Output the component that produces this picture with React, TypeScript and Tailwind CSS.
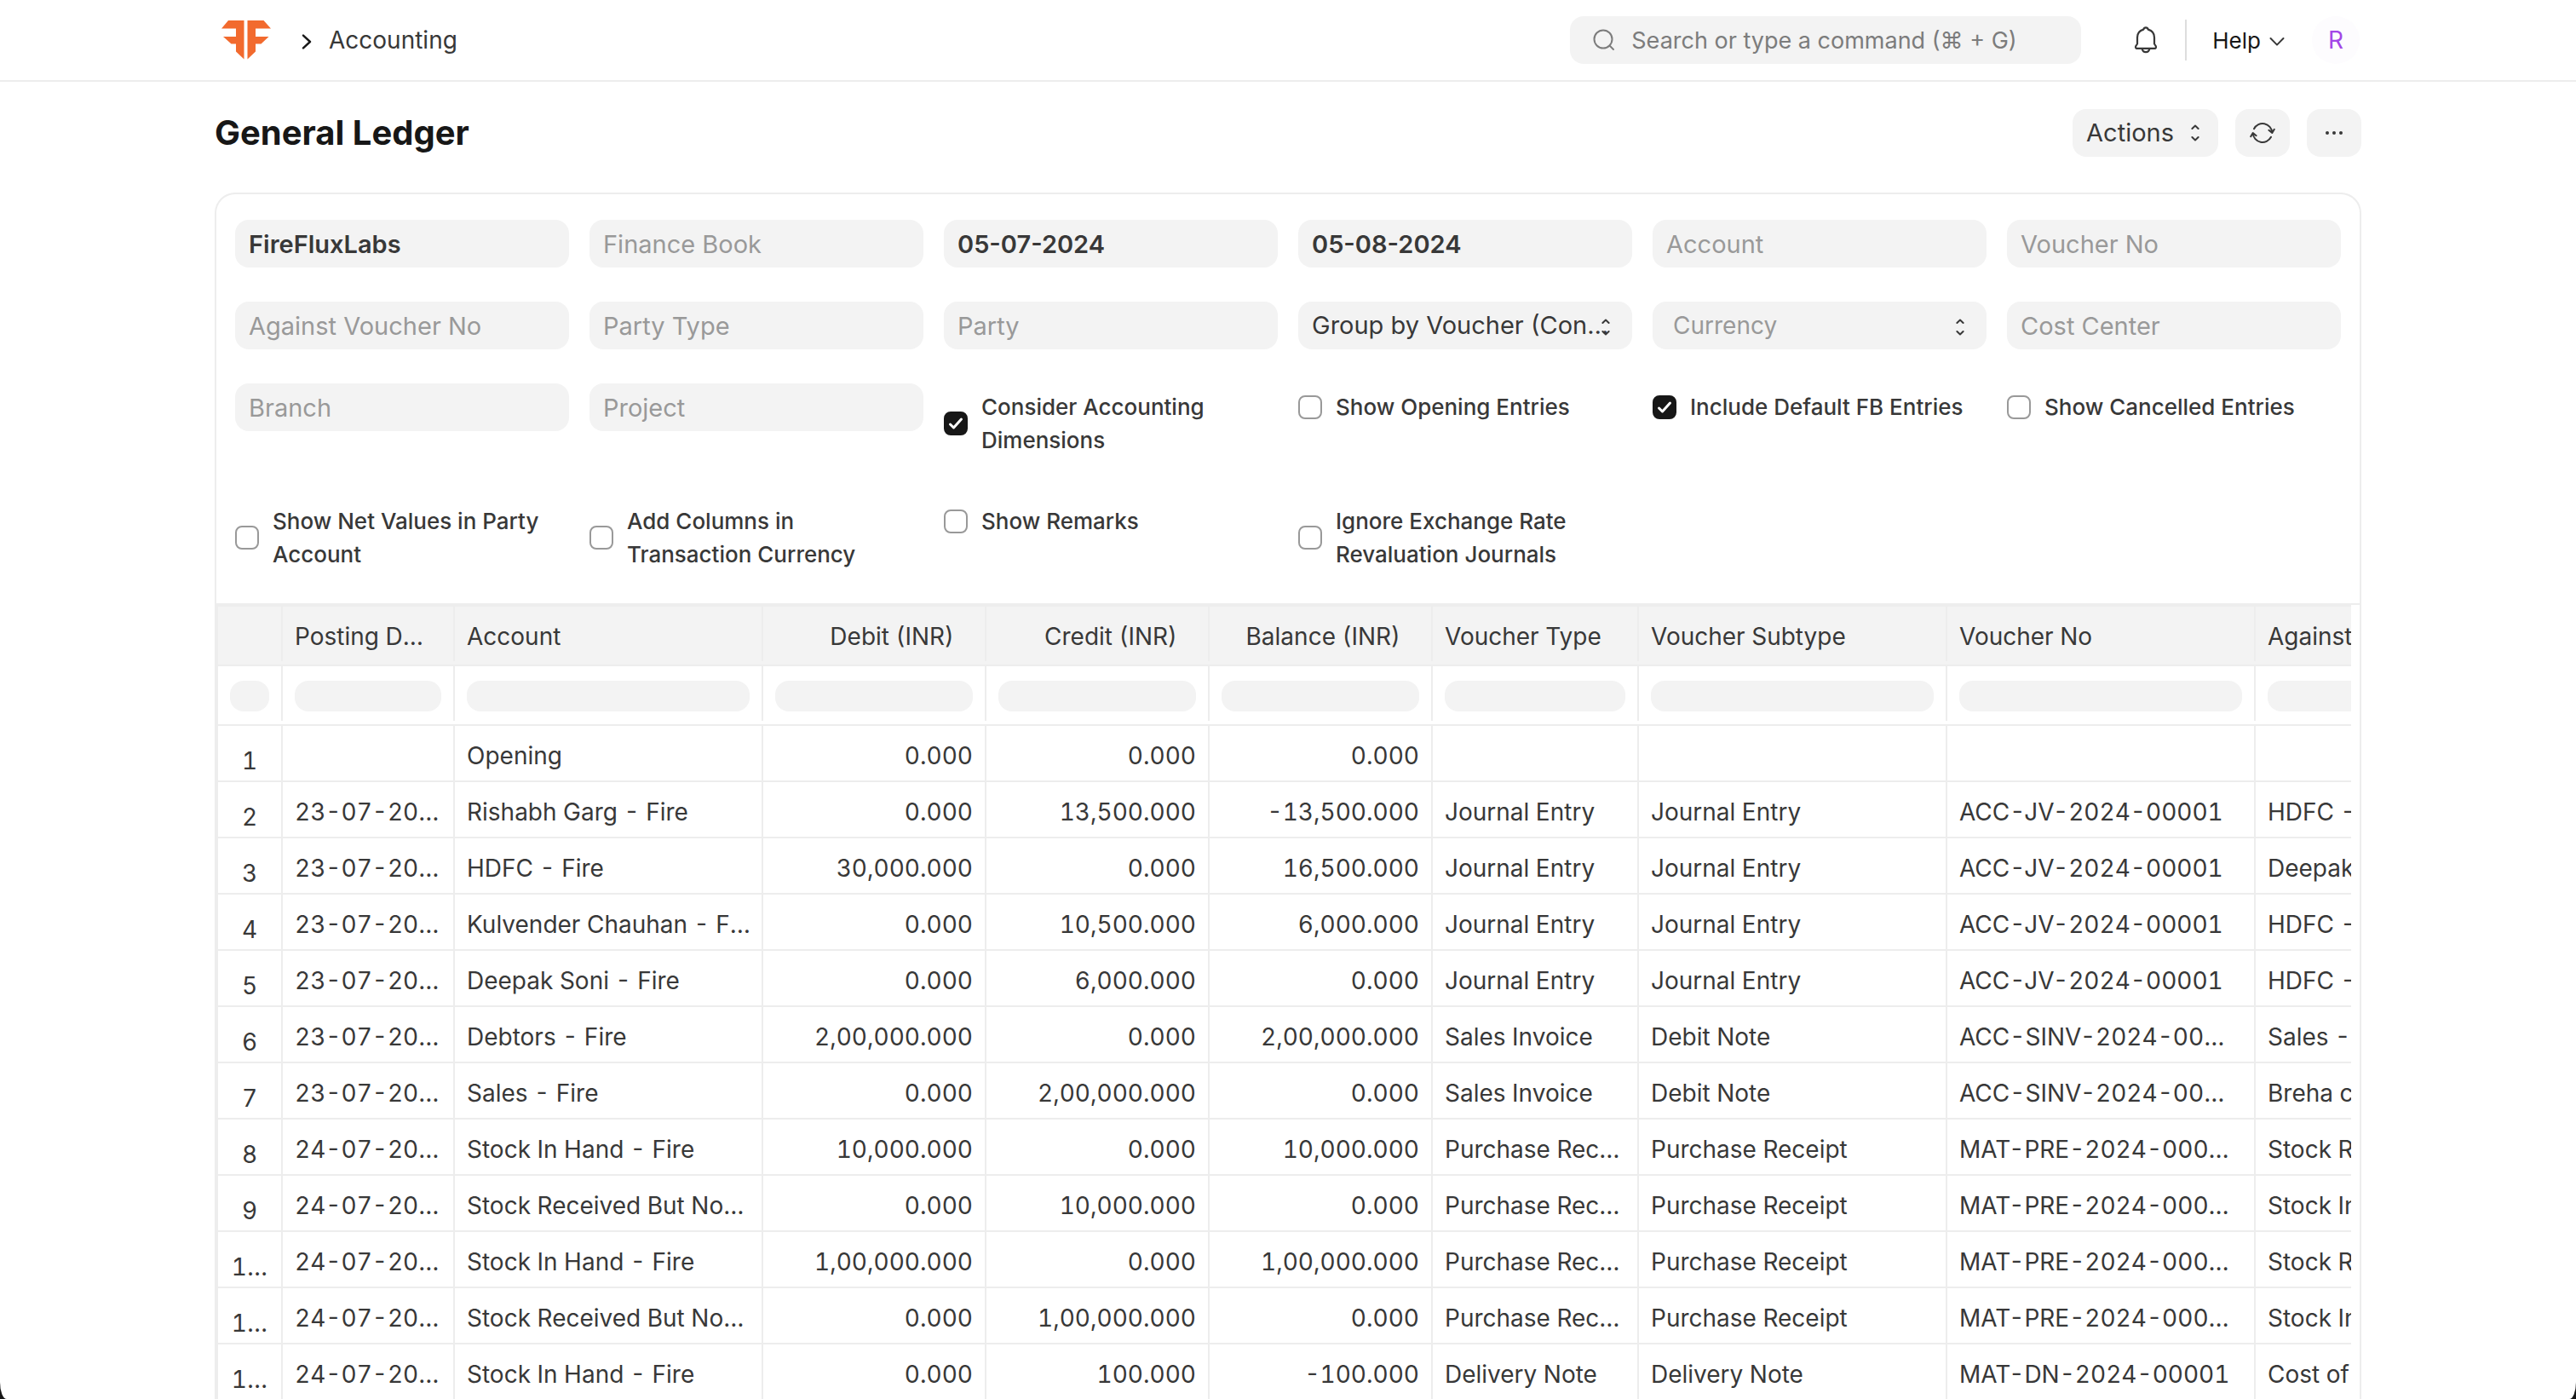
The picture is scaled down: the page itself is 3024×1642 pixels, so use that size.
import React, { useState } from 'react';

const COLUMNS = [
  { name: 'Posting Date', width: 202 },
  { name: 'Account', width: 362 },
  { name: 'Debit (INR)', width: 262, numeric: true },
  { name: 'Credit (INR)', width: 262, numeric: true },
  { name: 'Balance (INR)', width: 262, numeric: true },
  { name: 'Voucher Type', width: 242 },
  { name: 'Voucher Subtype', width: 362 },
  { name: 'Voucher No', width: 362 },
  { name: 'Against Account', width: 362 },
];

const ROWS = [
  ['1', '', 'Opening', '0.000', '0.000', '0.000', '', '', '', ''],
  ['2', '23-07-2024', 'Rishabh Garg - Fire', '0.000', '13,500.000', '-13,500.000', 'Journal Entry', 'Journal Entry', 'ACC-JV-2024-00001', 'HDFC - Fire'],
  ['3', '23-07-2024', 'HDFC - Fire', '30,000.000', '0.000', '16,500.000', 'Journal Entry', 'Journal Entry', 'ACC-JV-2024-00001', 'Deepak Soni - Fire'],
  ['4', '23-07-2024', 'Kulvender Chauhan - Fire', '0.000', '10,500.000', '6,000.000', 'Journal Entry', 'Journal Entry', 'ACC-JV-2024-00001', 'HDFC - Fire'],
  ['5', '23-07-2024', 'Deepak Soni - Fire', '0.000', '6,000.000', '0.000', 'Journal Entry', 'Journal Entry', 'ACC-JV-2024-00001', 'HDFC - Fire'],
  ['6', '23-07-2024', 'Debtors - Fire', '2,00,000.000', '0.000', '2,00,000.000', 'Sales Invoice', 'Debit Note', 'ACC-SINV-2024-00…', 'Sales - Fire'],
  ['7', '23-07-2024', 'Sales - Fire', '0.000', '2,00,000.000', '0.000', 'Sales Invoice', 'Debit Note', 'ACC-SINV-2024-00…', 'Breha corp'],
  ['8', '24-07-2024', 'Stock In Hand - Fire', '10,000.000', '0.000', '10,000.000', 'Purchase Receipt', 'Purchase Receipt', 'MAT-PRE-2024-000…', 'Stock Received But Not Billed'],
  ['9', '24-07-2024', 'Stock Received But Not Billed', '0.000', '10,000.000', '0.000', 'Purchase Receipt', 'Purchase Receipt', 'MAT-PRE-2024-000…', 'Stock In Hand - Fire'],
  ['1…', '24-07-2024', 'Stock In Hand - Fire', '1,00,000.000', '0.000', '1,00,000.000', 'Purchase Receipt', 'Purchase Receipt', 'MAT-PRE-2024-000…', 'Stock Received But Not Billed'],
  ['1…', '24-07-2024', 'Stock Received But Not Billed', '0.000', '1,00,000.000', '0.000', 'Purchase Receipt', 'Purchase Receipt', 'MAT-PRE-2024-000…', 'Stock In Hand - Fire'],
  ['1…', '24-07-2024', 'Stock In Hand - Fire', '0.000', '100.000', '-100.000', 'Delivery Note', 'Delivery Note', 'MAT-DN-2024-00001', 'Cost of Goods Sold - Fire'],
];

function Logo() {
  return (
    <svg width="58" height="46" viewBox="0 0 58 46" fill="#f26a2e" aria-hidden="true">
      <path d="M8 0H26.5V45.5L17 36.5V27.5H11.5L2 19H17V9.5H0Z" />
      <path d="M30.5 0H49.5L58 9.5H40V19H55.5L46.5 27.5H40V36.5L30.5 45.5Z" />
    </svg>
  );
}

function SortArrows({ className = '' }: { className?: string }) {
  return (
    <svg width="10" height="20" viewBox="0 0 10 20" fill="none" stroke="#383838" strokeWidth="2" strokeLinecap="round" strokeLinejoin="round" className={className} aria-hidden="true">
      <path d="M1.4 5L5 1.6L8.6 5M1.4 15L5 18.4L8.6 15" />
    </svg>
  );
}

function TextField({ label, value = '' }: { label: string; value?: string }) {
  const [text, setText] = useState(value);
  return (
    <input
      type="text"
      aria-label={label}
      placeholder={label}
      value={text}
      onChange={(e) => setText(e.target.value)}
      className="h-14 w-full min-w-0 rounded-2xl bg-[#f3f3f3] px-4 text-[29px] font-semibold text-[#383838] outline-none placeholder:font-normal placeholder:text-[#999999]"
    />
  );
}

function CheckField({ label, checked = false }: { label: string; checked?: boolean }) {
  const [on, setOn] = useState(checked);
  return (
    <label className="flex items-center gap-4 self-start py-2 text-[26px] leading-[39px] font-medium text-[#383838]">
      <span className="relative flex size-7 shrink-0">
        <input
          type="checkbox"
          checked={on}
          onChange={() => setOn(!on)}
          className="size-7 appearance-none rounded-lg border-2 border-[#999999] bg-white checked:border-[#171717] checked:bg-[#171717]"
        />
        {on && (
          <svg width="28" height="28" viewBox="0 0 28 28" fill="none" stroke="white" strokeWidth="3" strokeLinecap="round" strokeLinejoin="round" className="pointer-events-none absolute inset-0">
            <path d="M7.5 15L11.5 19L20.5 9" />
          </svg>
        )}
      </span>
      {label}
    </label>
  );
}

export default function GeneralLedger() {
  return (
    <div className="h-screen overflow-hidden bg-[#171717]">
      <div className="flex h-full flex-col overflow-hidden bg-white font-['Inter',sans-serif] text-[28px] text-[#383838] [border-bottom-left-radius:8px_20px] [border-bottom-right-radius:8px_20px]">
        <header className="h-24 shrink-0 border-b-2 border-[#ededed]">
          <div className="mx-auto flex h-full max-w-[2520px] items-center pr-[2px] pl-2">
            <a href="#home" aria-label="Home"><Logo /></a>
            <svg width="12" height="18" viewBox="0 0 12 18" fill="none" stroke="#171717" strokeWidth="2.4" strokeLinecap="round" strokeLinejoin="round" className="mt-1 mr-5 ml-9" aria-hidden="true">
              <path d="M2 1.6L10 9L2 16.4" />
            </svg>
            <a href="#accounting">Accounting</a>

            <div className="relative ml-auto w-[600px]">
              <svg width="28" height="28" viewBox="0 0 28 28" fill="none" stroke="#7c7c7c" strokeWidth="2" strokeLinecap="round" className="absolute top-[14px] left-[26px]" aria-hidden="true">
                <circle cx="13" cy="13" r="10.5" />
                <path d="M20.5 20.5L25 25" />
              </svg>
              <input type="text" aria-label="Search" placeholder="Search or type a command (⌘ + G)" className="h-14 w-full rounded-2xl bg-[#f3f3f3] pr-4 pl-[72px] text-[27px] outline-none placeholder:text-[#7c7c7c]" />
            </div>
            <button type="button" aria-label="Notifications" className="ml-[62px]">
              <svg width="28" height="32" viewBox="0 0 28 32" fill="none" stroke="#383838" strokeWidth="2.2" strokeLinejoin="round">
                <path d="M14 1.3C12.4 1.3 11.6 2.2 11.2 3.6C7 4.8 4 8.4 4 13V20.5L2.3 23C1.6 24.4 2.2 25.8 3.6 25.8H24.4C25.8 25.8 26.4 24.4 25.7 23L24 20.5V13C24 8.4 21 4.8 16.8 3.6C16.4 2.2 15.6 1.3 14 1.3Z" />
                <path d="M9.6 26C10 28.6 11.6 30.2 14 30.2C16.4 30.2 18 28.6 18.4 26" />
              </svg>
            </button>
            <div className="mr-[30px] ml-8 h-12 w-[2px] bg-[#dddddd]" />
            <button type="button" className="flex items-center gap-[10px] text-[26px] text-[#171717]">
              Help
              <svg width="18" height="12" viewBox="0 0 18 12" fill="none" stroke="#383838" strokeWidth="2" strokeLinecap="round" strokeLinejoin="round" className="mt-1" aria-hidden="true">
                <path d="M1.5 2L9 9.6L16.5 2" />
              </svg>
            </button>
            <button type="button" aria-label="User menu" className="ml-8 size-14 rounded-full bg-[#fdfcfe] text-[#a347e6]">R</button>
          </div>
        </header>

        <main className="mx-auto w-full max-w-[2520px]">
          <div className="flex items-center justify-between pt-8 pb-[42px]">
            <h1 className="text-[40px] leading-[56px] font-bold text-[#171717]">General Ledger</h1>
            <div className="flex gap-5">
              <button type="button" className="flex h-14 items-center gap-5 rounded-2xl bg-[#f3f3f3] pr-[22px] pl-4 text-[29px]">
                Actions
                <SortArrows />
              </button>
              <button type="button" aria-label="Refresh" className="flex h-14 w-16 items-center justify-center rounded-2xl bg-[#f3f3f3]">
                <svg width="30" height="26" viewBox="0 0 30 26" fill="none" stroke="#383838" strokeWidth="2" strokeLinecap="round" strokeLinejoin="round">
                  <path d="M5 8.2A11.3 11.3 0 0 1 26.3 12.5M22.4 9.8L26.3 13L28.8 8.8" />
                  <path d="M25 17.8A11.3 11.3 0 0 1 3.7 13.5M1.2 17.2L3.7 13L7.6 16.2" />
                </svg>
              </button>
              <button type="button" aria-label="More" className="flex h-14 w-16 items-center justify-center rounded-2xl bg-[#f3f3f3]">
                <svg width="22" height="4" viewBox="0 0 22 4" fill="#383838">
                  <circle cx="3" cy="2" r="2" />
                  <circle cx="11" cy="2" r="2" />
                  <circle cx="19" cy="2" r="2" />
                </svg>
              </button>
            </div>
          </div>

          <section className="rounded-t-3xl border-2 border-b-0 border-[#ededed]">
            <div className="grid grid-cols-6 gap-x-6 gap-y-10 px-[22px] py-[30px]">
              <TextField label="Company" value="FireFluxLabs" />
              <TextField label="Finance Book" />
              <TextField label="From Date" value="05-07-2024" />
              <TextField label="To Date" value="05-08-2024" />
              <TextField label="Account" />
              <TextField label="Voucher No" />
              <TextField label="Against Voucher No" />
              <TextField label="Party Type" />
              <TextField label="Party" />
              <div className="relative">
                <select aria-label="Group by" className="h-14 w-full appearance-none overflow-hidden rounded-2xl bg-[#f3f3f3] pr-6 pl-4 text-[29px] text-ellipsis outline-none">
                  <option>Group by Voucher (Consolidated)</option>
                  <option>Group by Voucher</option>
                  <option>Group by Account</option>
                  <option>Group by Party</option>
                </select>
                <SortArrows className="pointer-events-none absolute top-5 right-[26px]" />
              </div>
              <div className="relative">
                <select aria-label="Currency" className="h-14 w-full appearance-none rounded-2xl bg-[#f3f3f3] pr-12 pl-6 text-[28px] text-[#999999] outline-none">
                  <option>Currency</option>
                  <option>INR</option>
                  <option>USD</option>
                </select>
                <SortArrows className="pointer-events-none absolute top-5 right-[26px]" />
              </div>
              <TextField label="Cost Center" />
              <TextField label="Branch" />
              <TextField label="Project" />
              <CheckField label="Consider Accounting Dimensions" checked />
              <CheckField label="Show Opening Entries" />
              <CheckField label="Include Default FB Entries" checked />
              <CheckField label="Show Cancelled Entries" />
              <CheckField label="Show Net Values in Party Account" />
              <CheckField label="Add Columns in Transaction Currency" />
              <CheckField label="Show Remarks" />
              <CheckField label="Ignore Exchange Rate Revaluation Journals" />
            </div>

            <div className="border-t-2 border-[#ededed] pr-[10px]">
              <div className="overflow-hidden border-t-2 border-l-2 border-[#ededed]">
                <table className="w-[2754px] table-fixed border-separate border-spacing-0 tabular-nums">
                  <colgroup>
                    <col className="w-[76px]" />
                    {COLUMNS.map((c) => <col key={c.name} style={{ width: c.width }} />)}
                  </colgroup>
                  <thead>
                    <tr className="bg-[#f3f3f3]">
                      <th aria-label="Row" className="border-b-2 border-[#ededed] p-0 pb-1"><div className="h-16 border-r-2 border-[#ededed]" /></th>
                      {COLUMNS.map((c) => (
                        <th key={c.name} className="border-b-2 border-[#ededed] p-0 pb-1 font-normal">
                          <div className={`h-16 border-r-2 border-[#ededed] pt-[6px] pl-[14px] leading-[58px] ${c.numeric ? 'pr-9 text-right' : 'pr-7 text-left'}`}>
                            <div className="truncate">{c.name}</div>
                          </div>
                        </th>
                      ))}
                    </tr>
                    <tr>
                      {['Row', ...COLUMNS.map((c) => c.name)].map((name) => (
                        <td key={name} className="border-b-2 border-[#ededed] p-0 pb-1">
                          <div className="flex h-16 items-center border-r-2 border-[#ededed] px-[14px] pt-[6px]">
                            <input type="text" aria-label={`Filter ${name}`} className="h-9 w-full min-w-0 rounded-2xl bg-[#f3f3f3] px-3 text-[26px] outline-none" />
                          </div>
                        </td>
                      ))}
                    </tr>
                  </thead>
                  <tbody>
                    {ROWS.map(([no, ...cells], i) => (
                      <tr key={i}>
                        <td className="border-r-2 border-b-2 border-[#ededed] p-0 text-center">
                          <div className="h-16 pt-[18px] leading-[46px]">{no}</div>
                        </td>
                        {cells.map((cell, j) => (
                          <td key={j} className={`border-r-2 border-b-2 border-[#ededed] p-0 pl-[14px] ${COLUMNS[j].numeric ? 'pr-[14px] text-right' : 'pr-3 text-left'}`}>
                            <div className="h-16 truncate pt-[6px] leading-[58px]">{cell}</div>
                          </td>
                        ))}
                      </tr>
                    ))}
                  </tbody>
                </table>
              </div>
            </div>
          </section>
        </main>
      </div>
    </div>
  );
}
